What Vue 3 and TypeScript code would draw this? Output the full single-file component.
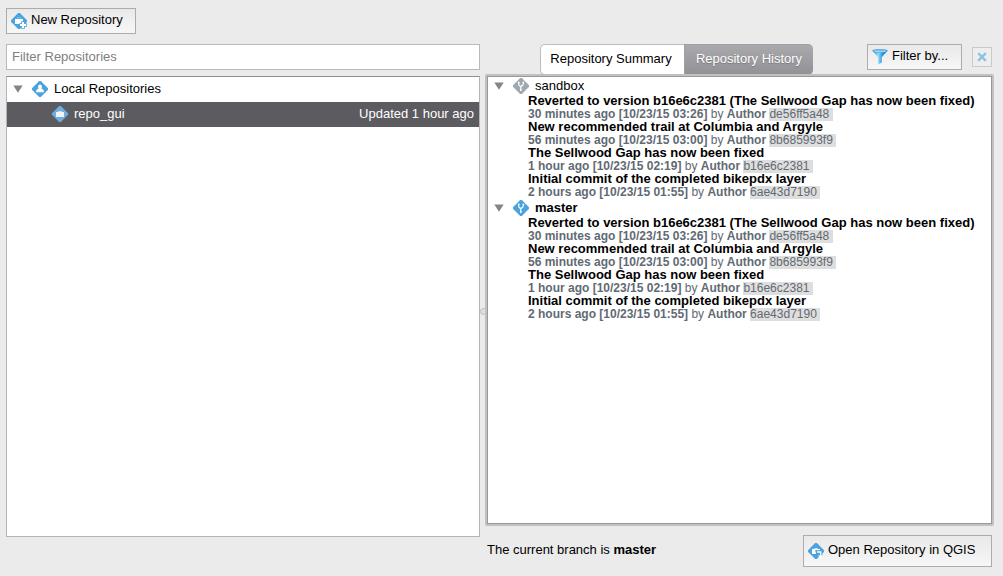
<script setup lang="ts">
interface Commit {
  id: string
  message: string
  age: string
  date: string
  author: string
}

interface Branch {
  name: string
  current: boolean
  commits: Commit[]
}

const commits: Commit[] = [
  { id: 'de56ff5a48', message: 'Reverted to version b16e6c2381 (The Sellwood Gap has now been fixed)', age: '30 minutes ago', date: '10/23/15 03:26', author: 'Author' },
  { id: '8b685993f9', message: 'New recommended trail at Columbia and Argyle', age: '56 minutes ago', date: '10/23/15 03:00', author: 'Author' },
  { id: 'b16e6c2381', message: 'The Sellwood Gap has now been fixed', age: '1 hour ago', date: '10/23/15 02:19', author: 'Author' },
  { id: '6ae43d7190', message: 'Initial commit of the completed bikepdx layer', age: '2 hours ago', date: '10/23/15 01:55', author: 'Author' },
]

const branches: Branch[] = [
  { name: 'sandbox', current: false, commits },
  { name: 'master', current: true, commits },
]
</script>

<template>
  <div class="window">
    <section class="left">
      <button class="btn new-btn">
        <svg class="icon" width="16" height="16" viewBox="0 0 16 16">
          <path class="blue" d="M6.4.7a2.2 2.2 0 0 1 3.2 0l5.7 5.7a2.2 2.2 0 0 1 0 3.2l-5.7 5.7a2.2 2.2 0 0 1-3.2 0L.7 9.6a2.2 2.2 0 0 1 0-3.2z" />
          <path d="M4 6h8v5H4z" fill="#fff" />
          <path d="M6 5.5V4.8h4v.7" fill="none" stroke="#8cc5eb" />
          <path d="M12 8.3v7.5M8.3 12h7.5" stroke="#4ba3de" stroke-width="3.6" />
          <path d="M12 9v6M9 12h6" stroke="#fff" stroke-width="2" />
        </svg>
        <span class="t-new">New Repository</span>
      </button>
      <input class="filter" type="text" placeholder="Filter Repositories" />
      <div class="tree">
        <div class="row">
          <svg class="arrow" width="10" height="8" viewBox="0 0 10 8"><path d="M.3.4h9.4L5 7.7z" /></svg>
          <svg class="icon" width="16" height="16" viewBox="0 0 16 16">
            <path class="blue" d="M6.4.7a2.2 2.2 0 0 1 3.2 0l5.7 5.7a2.2 2.2 0 0 1 0 3.2l-5.7 5.7a2.2 2.2 0 0 1-3.2 0L.7 9.6a2.2 2.2 0 0 1 0-3.2z" />
            <ellipse cx="8" cy="5.9" rx="1.9" ry="2.3" fill="#fff" />
            <path d="M4.2 11.2V9.8Q4.5 8.4 6.6 7.6h2.8q2.1.8 2.4 2.2v1.4z" fill="#fff" />
          </svg>
          <span class="t-local">Local Repositories</span>
        </div>
        <div class="row selected">
          <svg class="icon" width="16" height="16" viewBox="0 0 16 16">
            <path fill="#70ace0" d="M6.4.7a2.2 2.2 0 0 1 3.2 0l5.7 5.7a2.2 2.2 0 0 1 0 3.2l-5.7 5.7a2.2 2.2 0 0 1-3.2 0L.7 9.6a2.2 2.2 0 0 1 0-3.2z" />
            <path d="M4 6h8v5H4z" fill="#f3f3f5" />
            <path d="M6 5.5h4" stroke="#c3dbef" />
          </svg>
          <span class="t-repo">repo_gui</span>
          <span class="updated">Updated 1 hour ago</span>
        </div>
      </div>
    </section>

    <div class="splitter"><i></i></div>

    <section class="right">
      <div class="toolbar">
        <div class="tabs">
          <div class="tab first"><span class="t-sum">Repository Summary</span></div>
          <div class="tab active"><span class="t-his">Repository History</span></div>
        </div>
        <button class="btn filter-btn">
          <svg width="16" height="16" viewBox="0 0 16 16">
            <defs>
              <linearGradient id="funnel" x1="0" x2="1">
                <stop offset="0" stop-color="#2482d2" />
                <stop offset=".38" stop-color="#9bdcf7" />
                <stop offset=".65" stop-color="#2f98de" />
                <stop offset="1" stop-color="#1763ad" />
              </linearGradient>
            </defs>
            <path d="M.4 1.5 6.2 8.3v7.2l3.6-2V8.3l5.8-6.8z" fill="url(#funnel)" />
            <ellipse cx="8" cy="1.9" rx="7.5" ry="1.5" fill="#6fc0ea" stroke="#3c93d3" stroke-width=".6" />
            <path d="M2.6 2.2q5.4 1.5 10.8 0" stroke="#b9e6f8" fill="none" stroke-width=".8" />
          </svg>
          <span class="t-filter">Filter by...</span>
        </button>
        <button class="clear">
          <svg width="10" height="10" viewBox="0 0 10 10"><path d="m1.2 1.2 7.6 7.6M8.8 1.2 1.2 8.8" stroke="#90c3df" stroke-width="2.5" /></svg>
        </button>
      </div>

      <div class="history">
        <div class="history-inner">
          <div v-for="b in branches" :key="b.name" class="branch">
            <div class="branch-head">
              <svg class="arrow" width="10" height="8" viewBox="0 0 10 8"><path d="M.3.4h9.4L5 7.7z" /></svg>
              <svg class="icon" width="16" height="16" viewBox="0 0 16 16">
                <path :class="b.current ? 'blue' : 'grey'" d="M6.4.7a2.2 2.2 0 0 1 3.2 0l5.7 5.7a2.2 2.2 0 0 1 0 3.2l-5.7 5.7a2.2 2.2 0 0 1-3.2 0L.7 9.6a2.2 2.2 0 0 1 0-3.2z" />
                <path d="M5.7 4v2.2q0 1.6 2 2.2M10.4 4.2v1.4q0 1.8-2.6 3v4" fill="none" stroke="#fff" stroke-width="1.2" />
                <circle cx="5.7" cy="4.4" r=".9" fill="#fff" />
                <circle cx="10.4" cy="4.4" r=".9" fill="#fff" />
                <circle cx="7.8" cy="12" r=".9" fill="#fff" />
              </svg>
              <span class="branch-name" :class="{ current: b.current }">{{ b.name }}</span>
            </div>
            <div v-for="c in b.commits" :key="c.id" class="commit">
              <div class="message">{{ c.message }}</div>
              <div class="meta"><b>{{ c.age }} [{{ c.date }}]</b> by <b>{{ c.author }}</b> <span class="hash">{{ c.id }}&nbsp;</span></div>
            </div>
          </div>
        </div>
      </div>

      <div class="footer">
        <span class="status">The current branch is <b>master</b></span>
        <button class="btn open-btn">
          <svg class="icon" width="16" height="16" viewBox="0 0 16 16">
            <path class="blue" d="M6.4.7a2.2 2.2 0 0 1 3.2 0l5.7 5.7a2.2 2.2 0 0 1 0 3.2l-5.7 5.7a2.2 2.2 0 0 1-3.2 0L.7 9.6a2.2 2.2 0 0 1 0-3.2z" />
            <path d="M4 6h8v5H4z" fill="#fff" />
            <path d="M6 5.5h4" stroke="#b9dcf4" />
            <path d="M7 8h6.3v4" fill="none" stroke="#4ba3de" stroke-width="1" />
            <path d="M9.5 11V9h3.2v4.5" fill="none" stroke="#4ba3de" stroke-width="3.4" />
            <path d="M9 9h3.7v4.4M10.6 12.4l2.1 2.2 2.1-2.2" fill="none" stroke="#fff" stroke-width="1.3" />
          </svg>
          <span class="t-open">Open Repository in QGIS</span>
        </button>
      </div>
    </section>
  </div>
</template>

<style>
body {
  background: #ebebeb;
}
</style>

<style scoped>
* {
  box-sizing: border-box;
}
.window {
  width: 1003px;
  height: 576px;
  display: flex;
  padding-left: 6px;
  background: #ebebeb;
  overflow: hidden;
  font: 13px/16px "Liberation Sans", Arial, sans-serif;
  color: #000;
}
span {
  white-space: nowrap;
}
svg {
  flex: none;
  display: block;
}
.blue {
  fill: #4ba3de;
}
.grey {
  fill: #9fa8af;
}
.arrow {
  fill: #858585;
}
.left {
  width: 474px;
  padding-top: 8px;
  display: flex;
  flex-direction: column;
}
.btn {
  display: flex;
  align-items: center;
  border: 1px solid #acacac;
  background: linear-gradient(#e9e9e9, #f7f7f7);
  font: inherit;
  color: #000;
  padding: 0 0 0 4px;
}
.new-btn {
  width: 130px;
  height: 26px;
}
.new-btn span {
  margin: -2px 0 0 4px;
}
.filter {
  margin: 10px 0 6px;
  width: 474px;
  height: 26px;
  border: 1px solid #b9b9b9;
  background: #fff;
  padding: 0 5px 2px;
  font: inherit;
  outline: none;
}
.filter::placeholder {
  color: #808080;
  opacity: 1;
}
.tree {
  height: 461px;
  border: 1px solid #b4b4b4;
  border-top-color: #8e8e8e;
  background: #fff;
}
.row {
  height: 25px;
  display: flex;
  align-items: center;
  padding: 0 0 1px 6px;
}
.row .icon {
  margin-left: 9px;
}
.row span {
  margin: -1px 0 0 6px;
}
.row.selected {
  background: #5c5b5f;
  color: #fff;
  padding: 0 5px 1px 36px;
}
.row.selected .updated {
  margin-left: auto;
}
.splitter {
  width: 5px;
  padding-top: 308px;
}
.splitter i {
  display: block;
  width: 7px;
  height: 7px;
  border: 1px solid #bdbdbd;
  border-radius: 50%;
  background: #dfdfdf;
}
.right {
  width: 509px;
  padding-top: 44px;
}
.toolbar {
  height: 30px;
  padding-left: 55px;
  display: flex;
}
.tabs {
  display: flex;
  width: 273px;
  height: 31px;
}
.tab {
  display: flex;
  align-items: center;
  justify-content: center;
  width: 144px;
  background: #fff;
  border: 1px solid #bcbcbc;
  border-right: 0;
  border-radius: 5px 0 0 5px;
  padding-bottom: 1px;
}
.tab.first {
  padding-right: 3px;
}
.tab.active {
  width: 129px;
  background: linear-gradient(#aaa9ad, #929195);
  border-color: #a09fa3;
  border-radius: 0 5px 5px 0;
  color: #fff;
  text-shadow: 0 1px 1px #77767a;
}
.filter-btn {
  width: 95px;
  height: 26px;
  margin-left: 54px;
}
.filter-btn span {
  margin: -2px 0 0 4px;
}
.clear {
  width: 20px;
  height: 20px;
  margin: 3px 0 0 10px;
  padding: 0;
  display: flex;
  align-items: center;
  justify-content: center;
  border: 1px solid #cacaca;
  background: #eee;
}
.history {
  position: relative;
  height: 452px;
  border: 2px solid #c1c1c1;
  border-radius: 2px;
}
.history-inner {
  height: 448px;
  border: 1px solid #999;
  background: #fff;
}
.branch-head {
  height: 18px;
  display: flex;
  align-items: center;
  padding-left: 6px;
}
.branch-head .icon {
  margin-left: 9px;
}
.branch-name {
  margin-left: 6px;
}
.branch-name.current {
  font-weight: bold;
}
.commit {
  padding-left: 40px;
}
.message {
  height: 13px;
  line-height: 11px;
  font-weight: bold;
  white-space: nowrap;
}
.meta {
  height: 13px;
  font-size: 12px;
  line-height: 13px;
  color: #616a73;
  white-space: nowrap;
}
.hash {
  display: inline-block;
  height: 13px;
  background: #dedede;
}
.footer {
  display: flex;
  justify-content: space-between;
  padding: 9px 2px 0;
}
.status {
  line-height: 30px;
}
.open-btn {
  width: 189px;
  height: 32px;
}
.open-btn span {
  margin: -2px 0 0 4px;
}
</style>
